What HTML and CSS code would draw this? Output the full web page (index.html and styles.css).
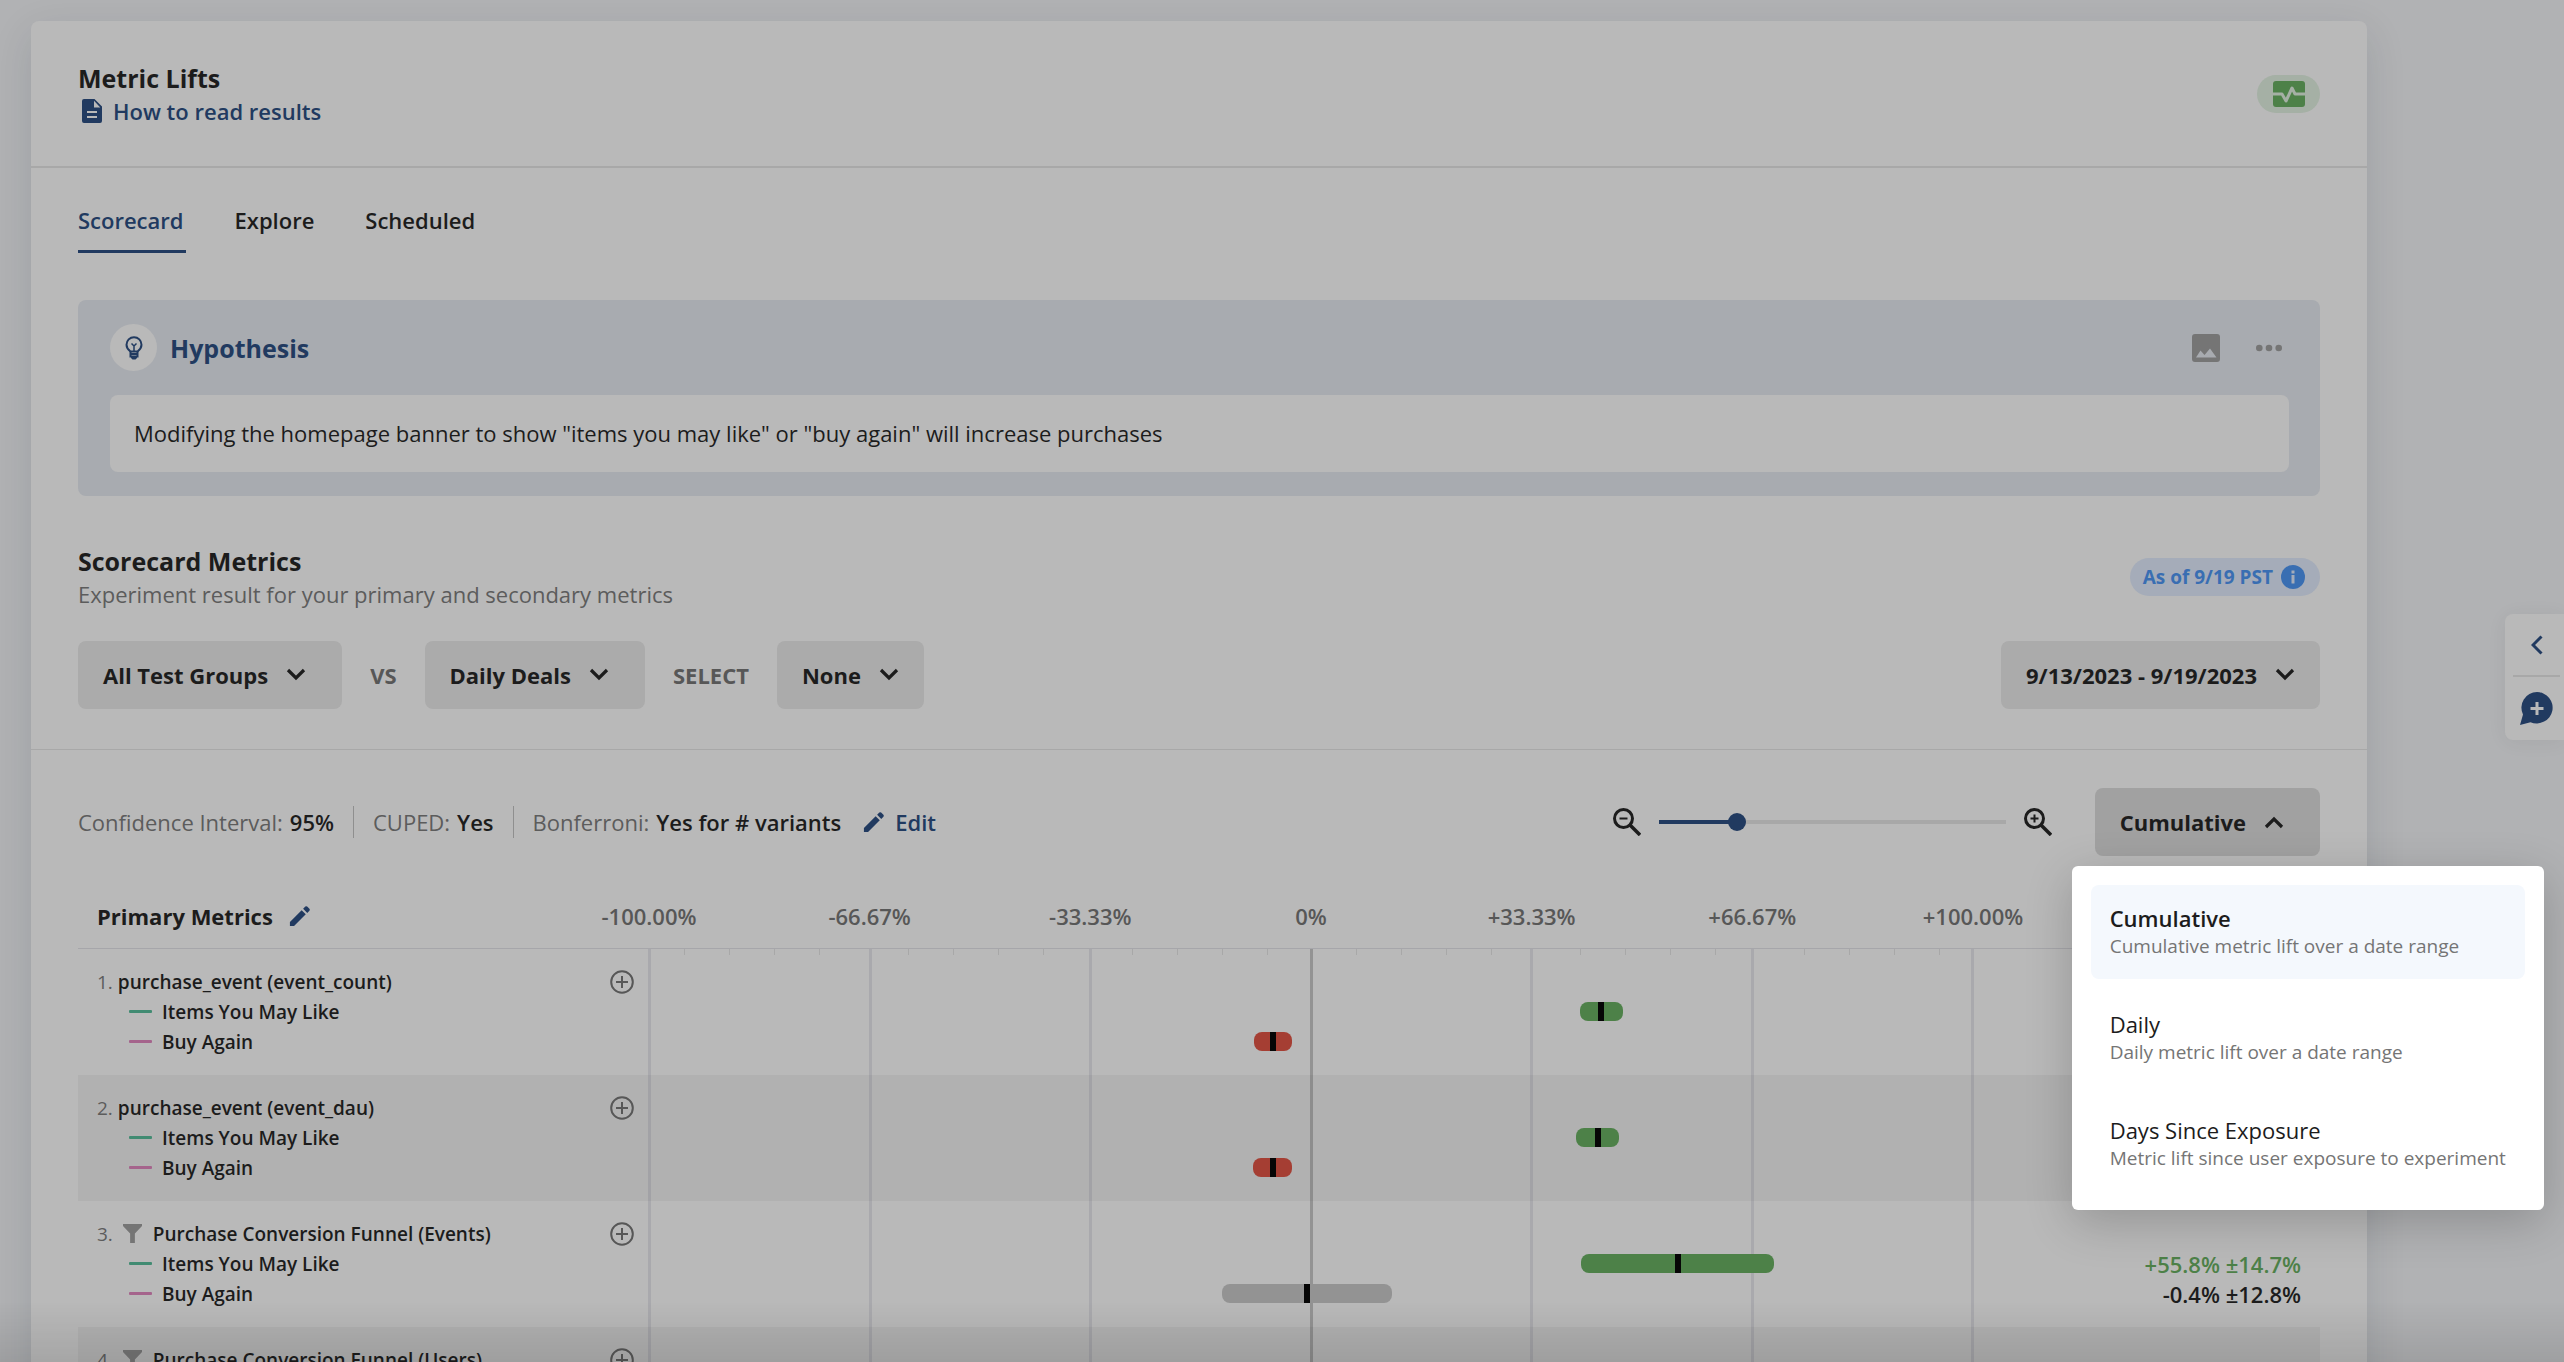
FILE: index.html
```html
<!DOCTYPE html>
<html lang="en">
<head>
<meta charset="utf-8">
<meta name="viewport" content="width=device-width, initial-scale=1">
<title>Metric Lifts</title>
<link rel="stylesheet" href="styles.css">
</head>
<body>
<svg class="sprite" aria-hidden="true">
  <symbol id="i-down" viewBox="0 0 24 24"><path d="M4 7l8 8 8-8" fill="none" stroke="currentColor" stroke-width="3.200"/></symbol>
  <symbol id="i-pencil" viewBox="0 0 24 24"><path d="M1 18.500V23h4.500L18.300 10.200 13.800 5.700zM22.300 6.200a1.500 1.500 0 0 0 0-2L19.800 1.700a1.500 1.500 0 0 0-2 0L15.400 4.100l4.500 4.500z" fill="currentColor"/></symbol>
  <symbol id="i-plus" viewBox="0 0 24 24"><circle cx="12" cy="12" r="10.800" fill="none" stroke="currentColor" stroke-width="2"/><path d="M12 6v12M6 12h12" stroke="currentColor" stroke-width="2"/></symbol>
  <symbol id="i-funnel" viewBox="0 0 20 20"><path d="M0 0h20v2l-7.500 8v10h-5V10L0 2z" fill="currentColor"/></symbol>
</svg>

<main class="card">
  <header class="card-head">
    <div>
      <h1>Metric Lifts</h1>
      <a class="help" href="#"><svg viewBox="0 0 20 24" width="20" height="24"><path d="M2 0h10.500L20 7.500V22a2 2 0 0 1-2 2H2a2 2 0 0 1-2-2V2a2 2 0 0 1 2-2zm10 1.800V8.500h6.300zM5 12v2h10v-2zm0 5v2h10v-2z" fill="currentColor" fill-rule="evenodd"/></svg>How to read results</a>
    </div>
    <span class="health"><svg viewBox="0 0 32 26" width="32" height="26"><rect width="32" height="26" rx="3" fill="#4d8148"/><path d="M0 13h9l4 7 6-13 3 6h10" fill="none" stroke="#a5b0a5" stroke-width="3" stroke-linejoin="round"/></svg></span>
  </header>

  <div class="body">
    <nav class="tabs">
      <a class="active" href="#">Scorecard</a>
      <a href="#">Explore</a>
      <a href="#">Scheduled</a>
    </nav>

    <section class="hypothesis">
      <div class="hyp-head">
        <span class="bulb"><svg viewBox="0 0 18 24" width="18" height="24"><g fill="none" stroke="currentColor"><path d="M5.500 15.500C3 13.500 1.500 11.500 1.500 8.700a7.500 7.500 0 0 1 15 0c0 2.800-1.500 4.800-4 6.800z" stroke-width="2"/><path d="M5.500 15v5.500h7V15M5.500 18h7" stroke-width="2"/><path d="M6.500 7.500L9 10l2.500-2.500M9 10v5" stroke-width="1.500"/></g><path d="M6 21h6v1l-1.500 1.500h-3L6 22z" fill="currentColor"/></svg></span>
        <h2>Hypothesis</h2>
        <button class="icon-btn" aria-label="Add image"><svg viewBox="0 0 28 28" width="28" height="28"><path d="M3 0h22a3 3 0 0 1 3 3v22a3 3 0 0 1-3 3H3a3 3 0 0 1-3-3V3a3 3 0 0 1 3-3zm1 23.500h20.500L18 14.500l-5.500 6.500-4-4.500z" fill="currentColor" fill-rule="evenodd"/></svg></button>
        <button class="icon-btn" aria-label="More"><svg viewBox="0 0 26 28" width="26" height="28" fill="currentColor"><circle cx="3.300" cy="14" r="3.300"/><circle cx="13" cy="14" r="3.300"/><circle cx="22.700" cy="14" r="3.300"/></svg></button>
      </div>
      <p class="hyp-text">Modifying the homepage banner to show "items you may like" or "buy again" will increase purchases</p>
    </section>

    <section class="metrics-head">
      <div>
        <h2>Scorecard Metrics</h2>
        <p>Experiment result for your primary and secondary metrics</p>
      </div>
      <span class="asof">As of 9/19 PST <svg viewBox="0 0 24 24" width="24" height="24"><circle cx="12" cy="12" r="12" fill="#396eb2"/><path d="M10.500 5.500h3v3h-3zM10.500 10h3v8.500h-3z" fill="#a5acb9"/></svg></span>
    </section>

    <div class="filters">
      <button class="drop">All Test Groups <svg><use href="#i-down"/></svg></button>
      <span>VS</span>
      <button class="drop">Daily Deals <svg><use href="#i-down"/></svg></button>
      <span>SELECT</span>
      <button class="drop compact">None <svg><use href="#i-down"/></svg></button>
      <button class="drop compact date">9/13/2023 - 9/19/2023 <svg><use href="#i-down"/></svg></button>
    </div>
  </div>

  <div class="results">
    <div class="toolbar">
      <dl>
        <div><dt>Confidence Interval:</dt> <dd>95%</dd></div>
        <div><dt>CUPED:</dt> <dd>Yes</dd></div>
        <div><dt>Bonferroni:</dt> <dd>Yes for # variants</dd></div>
      </dl>
      <button class="edit"><svg><use href="#i-pencil"/></svg>Edit</button>
      <div class="zoom">
        <button aria-label="Zoom out"><svg viewBox="0 0 28 28" width="28" height="28" fill="none" stroke="currentColor" stroke-width="3"><circle cx="10.500" cy="10.500" r="9"/><path d="M17 17l10 10" stroke-width="3.500"/><path d="M6.500 10.500h8" stroke-width="2"/></svg></button>
        <input type="range" min="0" max="100" value="21" aria-label="Chart zoom">
        <button aria-label="Zoom in"><svg viewBox="0 0 28 28" width="28" height="28" fill="none" stroke="currentColor" stroke-width="3"><circle cx="10.500" cy="10.500" r="9"/><path d="M17 17l10 10" stroke-width="3.500"/><path d="M6.500 10.500h8M10.500 6.500v8" stroke-width="2"/></svg></button>
      </div>
      <div class="mode">
        <button class="drop open" aria-expanded="true">Cumulative <svg><use href="#i-down"/></svg></button>
        <div class="menu" role="listbox">
          <button class="option selected" role="option" aria-selected="true"><b>Cumulative</b><small>Cumulative metric lift over a date range</small></button>
          <button class="option" role="option"><b>Daily</b><small>Daily metric lift over a date range</small></button>
          <button class="option" role="option"><b>Days Since Exposure</b><small>Metric lift since user exposure to experiment</small></button>
        </div>
      </div>
    </div>

    <div class="chart">
      <div class="grid"><i></i><i></i><i></i><i class="zero"></i><i></i><i></i><i></i></div>
      <div class="ticks"></div>
      <table>
        <colgroup><col class="c-name"><col><col class="c-value"></colgroup>
        <thead>
          <tr>
            <th><span class="name-head">Primary Metrics <button aria-label="Edit primary metrics"><svg><use href="#i-pencil"/></svg></button></span></th>
            <th><div class="axis"><span>-100.00%</span><span>-66.67%</span><span>-33.33%</span><span>0%</span><span>+33.33%</span><span>+66.67%</span><span>+100.00%</span></div></th>
            <th></th>
          </tr>
        </thead>
        <tbody>
          <tr>
            <td><div class="metric"><span class="num">1.</span> purchase_event (event_count) <button aria-label="Expand"><svg><use href="#i-plus"/></svg></button></div><div class="group like">Items You May Like</div><div class="group again">Buy Again</div></td>
            <td><div class="lane"><span class="bar up" style="left:70.300%;width:3.250%"></span></div><div class="lane"><span class="bar down" style="left:45.700%;width:2.900%"></span></div></td>
            <td></td>
          </tr>
          <tr>
            <td><div class="metric"><span class="num">2.</span> purchase_event (event_dau) <button aria-label="Expand"><svg><use href="#i-plus"/></svg></button></div><div class="group like">Items You May Like</div><div class="group again">Buy Again</div></td>
            <td><div class="lane"><span class="bar up" style="left:70.050%;width:3.250%"></span></div><div class="lane"><span class="bar down" style="left:45.600%;width:3%"></span></div></td>
            <td></td>
          </tr>
          <tr>
            <td><div class="metric"><span class="num">3.</span> <svg class="funnel"><use href="#i-funnel"/></svg> Purchase Conversion Funnel (Events) <button aria-label="Expand"><svg><use href="#i-plus"/></svg></button></div><div class="group like">Items You May Like</div><div class="group again">Buy Again</div></td>
            <td><div class="lane"><span class="bar up" style="left:70.400%;width:14.600%"></span></div><div class="lane"><span class="bar flat" style="left:43.300%;width:12.800%"></span></div></td>
            <td><div class="value pos">+55.8% ±14.7%</div><div class="value">-0.4% ±12.8%</div></td>
          </tr>
          <tr>
            <td><div class="metric"><span class="num">4.</span> <svg class="funnel"><use href="#i-funnel"/></svg> Purchase Conversion Funnel (Users) <button aria-label="Expand"><svg><use href="#i-plus"/></svg></button></div></td>
            <td></td>
            <td></td>
          </tr>
        </tbody>
      </table>
    </div>
  </div>
</main>

<aside class="side">
  <button aria-label="Open panel"><svg viewBox="0 0 12 20" width="12" height="20"><path d="M10.500 1.500L2 10l8.500 8.500" fill="none" stroke="currentColor" stroke-width="3"/></svg></button>
  <button aria-label="Add comment"><svg viewBox="0 0 33 33" width="33" height="33"><path d="M17 0a16 15.700 0 1 1-6.500 30.200L0 33l3-10.500A16 15.700 0 0 1 17 0z" fill="currentColor"/><path d="M17 10v13M10.500 16.500h13" stroke="#b9b9b9" stroke-width="3"/></svg></button>
</aside>
<div class="fade"></div>
</body>
</html>
```
FILE: styles.css
```css
:root {
  --surface: #b9b9b9;
  --line: #a8a8a8;
  --ink: #1c1c1c;
  --muted: #5c5c5c;
  --navy: #213a60;
}
* { box-sizing: border-box; }
html { height: 100%; overflow: hidden; }
body {
  margin: 0;
  height: 100%;
  overflow: hidden;
  padding: 21px 197px 0 31px;
  background: #b1b2b4;
  color: var(--ink);
  font: 22px/32px "Open Sans", "Noto Sans", sans-serif;
}
.sprite { display: none; }
h1, h2, p, dl, dd { margin: 0; }
h1, h2 { font-size: 25px; line-height: 34px; font-weight: 700; }
button { font: inherit; color: inherit; border: 0; padding: 0; background: none; }
a { color: inherit; text-decoration: none; }
svg { display: block; flex: none; }

.card { background: var(--surface); border-radius: 8px; box-shadow: 0 12px 40px rgba(20, 30, 50, .12); }
.card-head {
  display: flex;
  align-items: center;
  justify-content: space-between;
  height: 147px;
  padding: 0 47px;
  border-bottom: 2px solid var(--line);
}
.help { display: flex; align-items: center; gap: 11px; padding-left: 4px; color: var(--navy); font-weight: 600; }
.health { display: flex; align-items: center; justify-content: center; width: 63px; height: 38px; border-radius: 19px; background: #a5b0a5; }

.body { padding: 36px 47px 40px; border-bottom: 1px solid var(--line); }
.tabs { display: flex; gap: 49px; }
.tabs a { padding: 0 2px 14px 0; font-weight: 600; border-bottom: 3px solid transparent; }
.tabs .active { color: var(--navy); border-color: var(--navy); }

.hypothesis { margin-top: 47px; padding: 24px 31px 24px 32px; border-radius: 8px; background: #a8abb0; }
.hyp-head { display: flex; align-items: center; color: var(--navy); }
.bulb { display: flex; align-items: center; justify-content: center; width: 47px; height: 47px; margin-right: 13px; border-radius: 50%; background: var(--surface); }
.hyp-head h2 { flex: 1; }
.icon-btn { margin: 0 7px 0 29px; color: #757575; }
.hyp-text { margin-top: 24px; padding: 22px 24px 23px; border-radius: 8px; background: var(--surface); }

.metrics-head { display: flex; align-items: center; justify-content: space-between; margin-top: 48px; }
.metrics-head p { color: var(--muted); }
.asof { display: flex; align-items: center; gap: 8px; height: 38px; padding: 0 15px 0 13px; border-radius: 19px; background: #a5acb9; color: #396eb2; font-size: 19px; font-weight: 700; }

.filters { display: flex; align-items: center; gap: 28px; margin-top: 31px; color: #575757; font-weight: 700; }
.drop { display: flex; align-items: center; gap: 16px; height: 68px; padding: 0 34px 0 25px; border-radius: 8px; background: #ababab; color: var(--ink); font-weight: 700; white-space: nowrap; }
.drop svg { width: 24px; height: 24px; }
.compact { padding-right: 23px; }
.date { margin-left: auto; }

.results { padding: 38px 47px 0; }
.toolbar { display: flex; align-items: center; }
dl { display: flex; }
dl div { display: flex; gap: 7px; padding: 0 19px; border-left: 1px solid #8f8f8f; }
dl div:first-child { padding-left: 0; border: 0; }
dl div:last-child { padding-right: 22px; }
dt { color: var(--muted); }
dd { font-weight: 600; }
.edit { display: flex; align-items: center; gap: 10px; color: var(--navy); font-weight: 600; }
.edit svg, .name-head svg { width: 22px; height: 22px; color: var(--navy); }
.zoom { display: flex; align-items: center; gap: 18px; margin: 0 43px 0 auto; }
.zoom input { appearance: none; width: 347px; height: 18px; margin: 0; background: linear-gradient(90deg, var(--navy) 22%, #a8a8a8 22%) center / 100% 4px no-repeat; }
.zoom input::-webkit-slider-thumb { appearance: none; width: 18px; height: 18px; border-radius: 50%; background: var(--navy); }
.mode { position: relative; }
.open { background: #a1a1a1; }
.open svg { transform: rotate(180deg); }
.menu {
  position: absolute;
  z-index: 5;
  top: 78px;
  left: -23px;
  display: grid;
  gap: 12px;
  padding: 19px;
  border-radius: 6px;
  background: #fff;
  box-shadow: 0 12px 48px rgba(0, 0, 0, .2);
}
.option { padding: 19px; border-radius: 8px; text-align: left; white-space: nowrap; }
.option b { display: block; font-weight: 400; line-height: 28px; }
.option small { display: block; color: #757575; font-size: 19px; line-height: 28px; }
.selected { background: #f4f8fd; }
.selected b { font-weight: 600; }

.chart { position: relative; margin-top: 25px; }
.grid { position: absolute; top: 67px; bottom: 0; left: 570px; right: 346px; display: flex; justify-content: space-between; }
.grid i { width: 3px; background: #a9a9ad; }
.grid .zero { background: #939393; }
.ticks {
  position: absolute;
  top: 67px;
  left: 606px;
  right: 348px;
  height: 7px;
  background: repeating-linear-gradient(90deg, #a8a8a8 0 1px, transparent 1px 45px, #a8a8a8 45px 46px, transparent 46px 90px, #a8a8a8 90px 91px, transparent 91px 135px, #a8a8a8 135px 136px, transparent 136px 224px);
}
table { position: relative; width: 100%; table-layout: fixed; border-collapse: collapse; }
.c-name { width: 571px; }
.c-value { width: 347px; }
th { height: 67px; padding: 4px 0 0; border-bottom: 1px solid #a6a6aa; }
.name-head { display: flex; align-items: center; gap: 16px; padding-left: 19px; }
.axis { display: grid; grid-template-columns: repeat(7, 1fr); margin: 0 -8.333%; color: #575757; font-weight: 600; text-align: center; }
tbody td { height: 126px; padding: 18px 0; vertical-align: top; }
tbody tr:nth-child(even) { background: rgba(0, 0, 0, .04); }
.metric, .group { display: flex; align-items: center; height: 30px; padding-left: 19px; font-size: 19px; font-weight: 600; line-height: 30px; }
.num { margin-right: 5px; color: var(--muted); font-weight: 400; }
.metric button { margin: 0 15px 0 auto; color: #575757; }
.metric button svg { width: 24px; height: 24px; }
.funnel { width: 19px; height: 19px; margin: 0 11px 0 5px; color: #757575; }
.group { gap: 10px; padding-left: 51px; }
.group::before { content: ""; width: 23px; height: 3px; border-radius: 1px; }
.like::before { background: #418b72; }
.again::before { background: #a5648c; }
.lane { position: relative; height: 30px; }
.lane:first-child { margin-top: 30px; }
.bar { position: absolute; top: 5px; height: 19px; border-radius: 8px; background: linear-gradient(#060606, #060606) center / 6px 100% no-repeat var(--tone); }
.up { --tone: #4d8148; }
.down { --tone: #a53e33; }
.flat { --tone: #939393; }
.value { height: 30px; padding-right: 19px; text-align: right; font-weight: 600; line-height: 30px; }
.value:first-child { margin-top: 30px; }
.pos { color: #4d8148; }

.side { position: absolute; top: 614px; right: 0; width: 59px; display: grid; padding: 0 4px 0 8px; border-radius: 8px 0 0 8px; background: var(--surface); box-shadow: 0 2px 20px rgba(0, 0, 0, .06); color: var(--navy); }
.side button { display: flex; align-items: center; justify-content: center; height: 61px; }
.side button + button { height: 65px; border-top: 2px solid var(--line); }
.fade { position: fixed; left: 0; right: 0; bottom: 0; height: 60px; background: linear-gradient(transparent, rgba(0, 0, 0, .1)); }
```
